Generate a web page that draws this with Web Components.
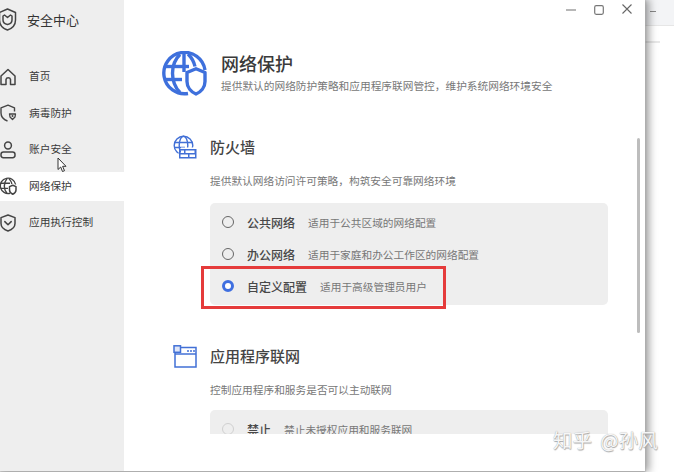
<!DOCTYPE html>
<html lang="zh"><head><meta charset="utf-8">
<style>
html,body{margin:0;padding:0;background:#fff}
body{width:674px;height:472px;overflow:hidden;font-family:"Noto Sans CJK SC","Noto Sans",sans-serif}
</style></head><body>
<security-app>
  <side-nav slot="nav" heading="安全中心">
    <nav-item icon="home">首页</nav-item>
    <nav-item icon="virus">病毒防护</nav-item>
    <nav-item icon="user">账户安全</nav-item>
    <nav-item icon="net" active>网络保护</nav-item>
    <nav-item icon="ctl">应用执行控制</nav-item>
  </side-nav>
  <page-header heading="网络保护" sub="提供默认的网络防护策略和应用程序联网管控，维护系统网络环境安全"></page-header>
  <setting-section heading="防火墙" sub="提供默认网络访问许可策略，构筑安全可靠网络环境" icon="wall" style="--top:39px;--g1:14px;--g2:14px">
    <radio-row label="公共网络" desc="适用于公共区域的网络配置"></radio-row>
    <radio-row label="办公网络" desc="适用于家庭和办公工作区的网络配置"></radio-row>
    <radio-row label="自定义配置" desc="适用于高级管理员用户" checked></radio-row>
  </setting-section>
  <setting-section heading="应用程序联网" sub="控制应用程序和服务是否可以主动联网" icon="app" style="--top:39px;--g1:14px;--g2:12px">
    <radio-row label="禁止" desc="禁止未授权应用和服务联网" faded></radio-row>
    <radio-row label="允许" desc="允许应用和服务联网"></radio-row>
  </setting-section>
</security-app>
<script>
const ICONS={
home:'<svg viewBox="0 0 17 18" width="17" height="18" fill="none" stroke="#444" stroke-width="1.5" stroke-linejoin="round"><path d="M1 8 8 1.5 15 8V16.5H10.5V11.5A2.3 2.3 0 0 0 6 11.5V16.5H1Z"/></svg>',
virus:'<svg viewBox="0 0 17 18" width="17" height="18" fill="none" stroke="#444" stroke-width="1.4" stroke-linejoin="round"><path d="M14.500 7.500V3.800L8 1.200 1 3.800V9C1 13 4 15.800 7.500 17"/><path d="M9.500 10H15.500L15 13 12.500 15.500 10 13Z" stroke-width="1.300"/><circle cx="12.500" cy="12" r="1" fill="#444" stroke="none"/></svg>',
user:'<svg viewBox="0 0 17 18" width="17" height="18" fill="none" stroke="#444" stroke-width="1.5"><circle cx="8" cy="4.5" r="3.4"/><rect x="1" y="11" width="14" height="5.7" rx="2.4"/></svg>',
net:'<svg viewBox="0 0 17 18" width="17" height="18" fill="none" stroke="#444" stroke-width="1.4" stroke-linejoin="round"><path d="M10 16.3A7.7 7.7 0 1 1 15.6 7.5"/><path d="M7 1.6C3.4 6 3.4 12 7 16.3M9 1.6C10.5 3.3 11.5 5 11.9 7M.8 6.2H10M.8 11.4H8"/><path d="M9.5 9.6 12.8 8.2 16 9.6V13C16 15 14.6 16.4 12.8 17.2 11 16.4 9.5 15 9.5 13Z" fill="#fff" stroke-width="1.5"/></svg>',
ctl:'<svg viewBox="0 0 17 18" width="17" height="18" fill="none" stroke="#444" stroke-width="1.5" stroke-linejoin="round"><path d="M8 1 15 3.6V9.5C15 13 12 15.6 8 17 4 15.6 1 13 1 9.5V3.6Z"/><path d="M4.8 7.6 8 10.8 11.2 7.6" stroke-linecap="round"/></svg>',
logo:'<svg viewBox="0 0 17 23" width="17" height="23" fill="none" stroke="#444" stroke-width="1.5" stroke-linejoin="round"><path d="M7.5 1 15.5 4.5V12C15.500 17 12 20.500 7.500 22 3 20.500-.5 17-.5 12V4.500Z"/><path d="M3 8 4.500 7 7.500 9.500 10.500 7 12 8V12C12 14.500 10 16 7.500 16.500 5 16 3 14.500 3 12Z"/></svg>',
wall:'<svg viewBox="0 0 24 24" width="24" height="24"><g fill="none" stroke="#4270d6" stroke-width="1.4"><circle cx="10.500" cy="10.500" r="9.300"/><ellipse cx="10.500" cy="10.500" rx="4.300" ry="9.300"/><path d="M1.500 7.500H19.500M1.500 12.500H12"/></g><path d="M8 12.500H23.700V23.700H5.500V17.500H8Z" fill="#fff"/><path d="M6 14H23.500V23.500H6ZM7.500 18H11V15.500H7.500ZM12.500 18H21.500V15.500H12.500ZM7.500 22H15V19.500H7.500ZM16.500 22H22V19.500H16.500Z" fill="#4270d6" fill-rule="evenodd"/></svg>',
app:'<svg viewBox="0 0 24 23" width="24" height="23"><g fill="none" stroke="#4270d6" stroke-width="1.500"><path d="M2 6.500V22H23V2.500H8"/><path d="M2 9H23"/><rect x="1" y=".8" width="6.500" height="6.500" fill="#dfe6f8"/></g><path d="M14 5.200h2v1.600h-2zM17 5.200h2v1.600h-2zM20 5.200h2v1.600h-2z" fill="#4270d6"/></svg>',
big:'<svg viewBox="0 0 45 45" width="45" height="45"><g fill="none" stroke="#3e70dc" stroke-width="3.400" stroke-linejoin="round"><path d="M26 42.500A20.700 20.700 0 1 1 43 19"/><path d="M18 3.500C8 13 8 31 18 41.500"/><path d="M26 3C29.500 6.500 32 11 33 15.500"/><path d="M3.500 15.500H27"/><path d="M3.500 28.500H20"/><path d="M22 2V21"/><path d="M25 21.500 34 17.800 43 21.500V30.500C43 36.500 38.800 41 34 43 29.200 41 25 36.500 25 30.500Z" fill="#fff"/></g></svg>',
cursor:'<svg viewBox="0 0 10 16" width="10" height="16"><path d="M1 1V12.500L3.700 10 5.500 14.500 7.500 13.700 5.600 9.300H9Z" fill="#fff" stroke="#333" stroke-width="1" stroke-linejoin="round"/></svg>'
};
function def(name,css,html){
  customElements.define(name,class extends HTMLElement{
    constructor(){super();this.attachShadow({mode:'open'})}
    connectedCallback(){this.shadowRoot.innerHTML='<style>'+css+'</style>'+html(this);}
  });
}
def('security-app',`
:host{display:block;width:674px;height:472px;position:relative;overflow:hidden;background:#fff;color:#333}
.back{position:absolute;left:645px;top:0;right:0;height:25px;background:#f3f4f6;border-bottom:1px solid #e6e6e6}
.back i{position:absolute;left:5px;top:11px;width:6px;height:1px;background:#888}
.back b{position:absolute;left:0;top:41px;width:15px;height:2px;background:#e8e8e8}
.win{position:absolute;left:0;top:0;width:645px;height:471px;display:flex;background:#fff;box-shadow:0 0 0 .5px #bbb,3px 0 8px 1px rgba(0,0,0,.38),0 1px 2px rgba(0,0,0,.3)}
.main{flex:1;display:flex;flex-direction:column;position:relative;min-width:0}
.bar{height:20px;flex:none;display:flex;justify-content:flex-end;align-items:center;gap:18px;padding:0 13px 0 0}
.bar svg{display:block}
.scroll{height:414px;flex:none;overflow:hidden;padding:31px 37px 0 38px;box-sizing:border-box}
.thumb{position:absolute;left:513px;top:138px;width:3px;height:195px;border-radius:2px;background:#bdbdbd}
.red{position:absolute;left:201px;top:266px;width:245px;height:43px;box-sizing:border-box;border:3px solid #e53b3b}
.cur{position:absolute;left:57px;top:157px;display:block;line-height:0}
.mark{position:absolute;left:553px;top:428px;font-size:19.500px;word-spacing:4px;line-height:24px;color:rgba(255,255,255,.92);text-shadow:0 0 1px #999,.5px .5px 1px #aaa;white-space:nowrap;font-family:"Noto Sans CJK SC",sans-serif}
`,()=>`
<div class="back"><i></i><b></b></div>
<div class="win"><slot name="nav"></slot>
 <div class="main">
  <div class="bar">
   <svg width="10" height="2"><rect width="10" height="1.200" y=".4" fill="#888"/></svg>
   <svg width="10" height="10" fill="none"><rect x=".7" y=".7" width="8.600" height="8.600" rx="1.500" stroke="#777" stroke-width="1.200"/></svg>
   <svg width="10" height="10" fill="none" style="margin-top:-2px"><path d="M.5.500 9.500 9.500M9.500.500 .5 9.500" stroke="#666" stroke-width="1.100"/></svg>
  </div>
  <div class="scroll"><slot></slot></div>
  <div class="thumb"></div>
 </div>
</div>
<div class="red"></div>
<div class="cur">${ICONS.cursor}</div>
<div class="mark">知乎 @孙风</div>`);
def('side-nav',`
:host{display:block;flex:none;width:124px;height:100%;background:#eee}
.t{height:40px;box-sizing:border-box;padding:0 0 2px 27px;display:flex;align-items:center;font-size:13px;color:#333;position:relative}
.t span{position:absolute;left:0;top:8px;line-height:0}
nav{display:flex;flex-direction:column;gap:7.500px;margin-top:22px}
`,e=>`<div class="t"><span>${ICONS.logo}</span>${e.getAttribute('heading')}</div><nav><slot></slot></nav>`);
def('nav-item',`
:host{display:flex;align-items:center;height:29px;box-sizing:border-box;font-size:10.700px;color:#3a3a3a;padding:0 0 2px 29px;position:relative}
:host([active]){background:#fff}
span{position:absolute;left:0;top:5.500px;line-height:0}
`,e=>`<span>${ICONS[e.getAttribute('icon')]}</span><slot></slot>`);
def('page-header',`
:host{display:flex;gap:14px;height:45px}
.i{line-height:0;flex:none}
h1{margin:0;font-weight:500;font-size:18px;line-height:24px;color:#3a3a3a}
p{margin:3px 0 0;font-size:10.700px;line-height:16px;color:#777;white-space:nowrap}
`,e=>`<div class="i">${ICONS.big}</div><div><h1>${e.getAttribute('heading')}</h1><p>${e.getAttribute('sub')}</p></div>`);
def('setting-section',`
:host{display:block;margin-top:var(--top);padding-left:11px}
.h{display:flex;align-items:center;gap:13px;height:24px}
.h span{width:24px;line-height:0;flex:none}
h2{margin:0;font-weight:500;font-size:15px;line-height:24px;color:#444}
p{margin:var(--g1) 0 var(--g2) 37px;font-size:10.700px;line-height:16px;color:#777}
.panel{margin-left:37px;width:398px;background:#eee;border-radius:5px;padding:3px 0;display:flex;flex-direction:column}
`,e=>`<div class="h"><span>${ICONS[e.getAttribute('icon')]}</span><h2>${e.getAttribute('heading')}</h2></div><p>${e.getAttribute('sub')}</p><div class="panel"><slot></slot></div>`);
def('radio-row',`
:host{display:flex;align-items:center;height:32px;padding-left:12px;gap:13px;white-space:nowrap}
.r{width:12px;height:12px;box-sizing:border-box;border-radius:50%;border:1.200px solid #666;flex:none}
:host([checked]) .r{border:3.500px solid #3f6fe0;background:#fff}
:host([faded]) .r{border-color:#d0d0d0}
b{font-weight:500;font-size:12px;color:#484848}
i{font-style:normal;font-size:10.700px;color:#777}
`,e=>`<span class="r"></span><b>${e.getAttribute('label')}</b><i>${e.getAttribute('desc')}</i>`);
</script>
</body></html>
